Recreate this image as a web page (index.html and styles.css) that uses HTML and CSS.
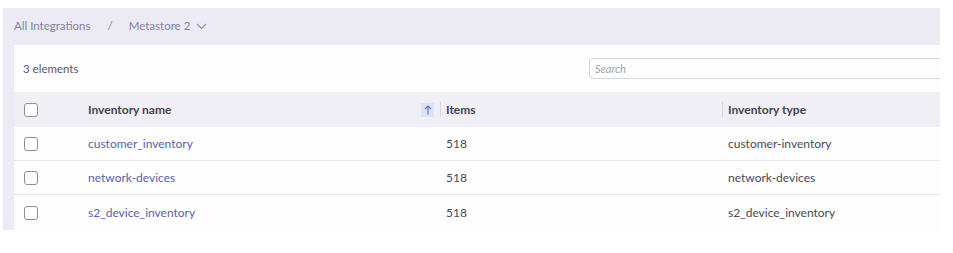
FILE: index.html
```html
<!DOCTYPE html>
<html>
<head>
<meta charset="utf-8">
<link rel="stylesheet" href="styles.css">
</head>
<body>
<div class="shell">
  <nav class="crumbs">
    <span class="crumb">All Integrations</span>
    <span class="sep">/</span>
    <span class="crumb">Metastore 2</span>
    <svg class="chev" width="11" height="7" viewBox="0 0 11 7"><path d="M1 1l4.5 4.5L10 1" fill="none" stroke="#8a8fb0" stroke-width="1.1"/></svg>
  </nav>
  <section class="panel">
    <div class="toolbar">
      <span class="count">3 elements</span>
      <div class="search">Search</div>
    </div>
    <div class="table">
      <div class="row head">
        <div class="cell chk"><span class="box"></span></div>
        <div class="cell name">Inventory name<span class="sort"><svg width="8" height="10" viewBox="0 0 8 10"><path d="M4 9.5V1M1 4l3-3 3 3" fill="none" stroke="#5b6fd6" stroke-width="1.1"/></svg></span></div>
        <div class="cell items"><span class="div"></span>Items</div>
        <div class="cell type"><span class="div"></span>Inventory type</div>
      </div>
      <div class="row">
        <div class="cell chk"><span class="box"></span></div>
        <div class="cell name"><a class="link">customer_inventory</a></div>
        <div class="cell items">518</div>
        <div class="cell type">customer-inventory</div>
      </div>
      <div class="row">
        <div class="cell chk"><span class="box"></span></div>
        <div class="cell name"><a class="link">network-devices</a></div>
        <div class="cell items">518</div>
        <div class="cell type">network-devices</div>
      </div>
      <div class="row last">
        <div class="cell chk"><span class="box"></span></div>
        <div class="cell name"><a class="link">s2_device_inventory</a></div>
        <div class="cell items">518</div>
        <div class="cell type">s2_device_inventory</div>
      </div>
    </div>
  </section>
</div>
</body>
</html>
```
FILE: styles.css
```css
* { box-sizing: border-box; }
html, body { margin: 0; padding: 0; background: #ffffff; }
body {
  font-family: "Lato", "Open Sans", sans-serif;
  font-size: 12px;
  color: #4a4a55;
  width: 953px;
  height: 253px;
  overflow: hidden;
}
.shell {
  margin: 8px 0 0 3px;
  width: 937px;
  background: #ecebf4;
  padding-left: 11px;
  overflow: hidden;
}
.crumbs {
  height: 37px;
  display: flex;
  align-items: center;
  color: #7d82a4;
  font-size: 11.5px;
  padding-bottom: 2px;
  white-space: nowrap;
}
.sep { margin: 0 16px 0 17px; }
.chev { margin-left: 6px; margin-top: 1px; }
.panel {
  background: #fdfdfe;
  overflow: hidden;
}
.toolbar {
  height: 47px;
  display: grid;
  grid-template-columns: 575px 420px;
  align-items: center;
}
.count { color: #5a5a64; font-size: 11.5px; padding-left: 9px; white-space: nowrap; }
.search {
  height: 21px;
  border: 1px solid #d6d6dc;
  border-radius: 3px;
  font-style: italic;
  color: #a4a4ad;
  font-size: 11px;
  padding-left: 5px;
  line-height: 19px;
}
.row {
  display: grid;
  grid-template-columns: 74px 352px 282px 1fr;
  height: 34px;
  align-items: center;
  border-bottom: 1px solid #e8e8ed;
  white-space: nowrap;
}
.row.last { height: 35px; border-bottom: none; }
.row.head {
  background: #efeff5;
  height: 35px;
  border-bottom: none;
  font-weight: 700;
  color: #44444e;
}
.cell { display: flex; align-items: center; height: 100%; }
.chk { padding-left: 10px; }
.box {
  width: 14px;
  height: 14px;
  border: 1px solid #8e8e98;
  border-radius: 3px;
  background: #fff;
}
.name { position: relative; }
.link { color: #5a62b0; text-decoration: none; }
.sort {
  position: absolute;
  left: 333px;
  top: 11px;
  width: 13px;
  height: 14px;
  background: #dde2f6;
  display: flex;
  align-items: center;
  justify-content: center;
}
.items, .type { padding-left: 6px; }
.head .items, .head .type { padding-left: 0; }
.div {
  width: 1px;
  height: 15px;
  background: #d5d6e2;
  margin-right: 5px;
}
```
